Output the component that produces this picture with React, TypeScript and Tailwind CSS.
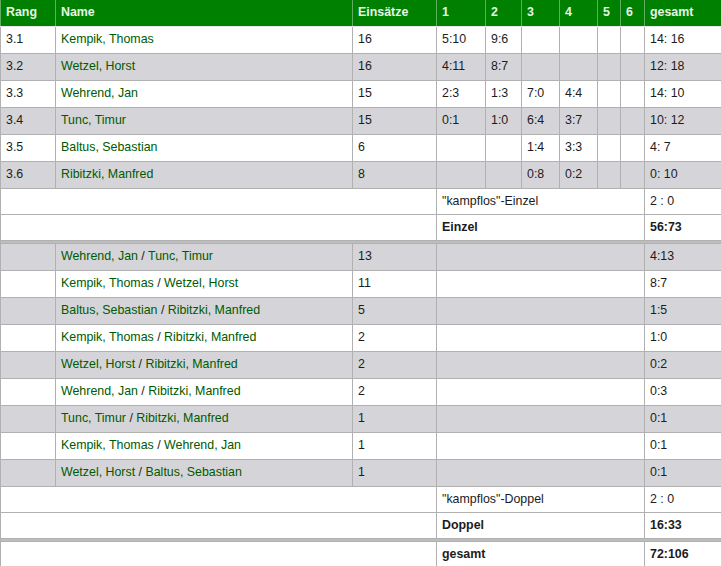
// Mannschaftsbilanz – Einzel und Doppel
import * as React from "react";

type Single = {rang: string; name: string; einsaetze: string; sets: string[]; gesamt: string};
type Double = {a: string; b: string; einsaetze: string; gesamt: string};

const singles: Single[] = [
  {rang: "3.1", name: "Kempik, Thomas", einsaetze: "16", sets: ["5:10", "9:6", "", "", "", ""], gesamt: "14: 16"},
  {rang: "3.2", name: "Wetzel, Horst", einsaetze: "16", sets: ["4:11", "8:7", "", "", "", ""], gesamt: "12: 18"},
  {rang: "3.3", name: "Wehrend, Jan", einsaetze: "15", sets: ["2:3", "1:3", "7:0", "4:4", "", ""], gesamt: "14: 10"},
  {rang: "3.4", name: "Tunc, Timur", einsaetze: "15", sets: ["0:1", "1:0", "6:4", "3:7", "", ""], gesamt: "10: 12"},
  {rang: "3.5", name: "Baltus, Sebastian", einsaetze: "6", sets: ["", "", "1:4", "3:3", "", ""], gesamt: "4: 7"},
  {rang: "3.6", name: "Ribitzki, Manfred", einsaetze: "8", sets: ["", "", "0:8", "0:2", "", ""], gesamt: "0: 10"},
];

const doubles: Double[] = [
  {a: "Wehrend, Jan", b: "Tunc, Timur", einsaetze: "13", gesamt: "4:13"},
  {a: "Kempik, Thomas", b: "Wetzel, Horst", einsaetze: "11", gesamt: "8:7"},
  {a: "Baltus, Sebastian", b: "Ribitzki, Manfred", einsaetze: "5", gesamt: "1:5"},
  {a: "Kempik, Thomas", b: "Ribitzki, Manfred", einsaetze: "2", gesamt: "1:0"},
  {a: "Wetzel, Horst", b: "Ribitzki, Manfred", einsaetze: "2", gesamt: "0:2"},
  {a: "Wehrend, Jan", b: "Ribitzki, Manfred", einsaetze: "2", gesamt: "0:3"},
  {a: "Tunc, Timur", b: "Ribitzki, Manfred", einsaetze: "1", gesamt: "0:1"},
  {a: "Kempik, Thomas", b: "Wehrend, Jan", einsaetze: "1", gesamt: "0:1"},
  {a: "Wetzel, Horst", b: "Baltus, Sebastian", einsaetze: "1", gesamt: "0:1"},
];

const widths = [55, 297, 84, 49, 36, 38, 38, 23, 24, 77];
const headers = ["Rang", "Name", "Einsätze", "1", "2", "3", "4", "5", "6", "gesamt"];

const cell = "px-[5px] py-0 border border-[#b1b1b1] align-middle whitespace-nowrap";
const td = `${cell} h-[27px]`;
const tdShort = `${cell} h-[26px]`;
const rowBg = (i: number) => (i % 2 === 0 ? "bg-white" : "bg-[#d5d5d9]");

const Separator = () => (
  <tr>
    <td colSpan={10} className="h-[3px] p-0 bg-[#bdbdbd] border-x border-[#b1b1b1]" />
  </tr>
);

const SumRow = ({label, value, bold}: {label: string; value: string; bold?: boolean}) => {
  const c = bold ? `${tdShort} font-bold` : tdShort;
  return (
    <tr className="bg-white">
      <td colSpan={3} className={tdShort} />
      <td colSpan={6} className={c}>{label}</td>
      <td className={c}>{value}</td>
    </tr>
  );
};

export default function App() {
  return (
    <div className="w-[721px] h-[566px] overflow-hidden bg-white">
      <table
        className="w-[721px] table-fixed border-collapse text-[12.4px] text-[#1c1c1c]"
        style={{fontFamily: '"Liberation Sans", Arial, sans-serif'}}
      >
        <colgroup>
          {widths.map((w, i) => (
            <col key={i} style={{width: w}} />
          ))}
        </colgroup>
        <thead>
          <tr className="bg-[#008000]">
            {headers.map((h) => (
              <th
                key={h}
                className="h-[26px] px-[5px] py-0 text-left font-bold text-[#e4f7e4] border-x border-[#5fae5f] border-b border-b-[#e8e8e8]"
              >
                {h}
              </th>
            ))}
          </tr>
        </thead>
        <tbody>
          {singles.map((s, i) => (
            <tr key={s.rang} className={rowBg(i)}>
              <td className={td}>{s.rang}</td>
              <td className={`${td} text-[#005a00]`}>{s.name}</td>
              <td className={td}>{s.einsaetze}</td>
              {s.sets.map((v, j) => (
                <td key={j} className={td}>{v}</td>
              ))}
              <td className={td}>{s.gesamt}</td>
            </tr>
          ))}
          <SumRow label={'"kampflos"-Einzel'} value="2 : 0" />
          <SumRow label="Einzel" value="56:73" bold />
          <Separator />
          {doubles.map((d, i) => (
            <tr key={`${d.a}-${d.b}`} className={rowBg(i + 1)}>
              <td className={td} />
              <td className={td}>
                <span className="text-[#005a00]">{d.a}</span> / <span className="text-[#005a00]">{d.b}</span>
              </td>
              <td className={td}>{d.einsaetze}</td>
              <td colSpan={6} className={td} />
              <td className={td}>{d.gesamt}</td>
            </tr>
          ))}
          <SumRow label={'"kampflos"-Doppel'} value="2 : 0" />
          <SumRow label="Doppel" value="16:33" bold />
          <Separator />
          <SumRow label="gesamt" value="72:106" bold />
        </tbody>
      </table>
    </div>
  );
}
